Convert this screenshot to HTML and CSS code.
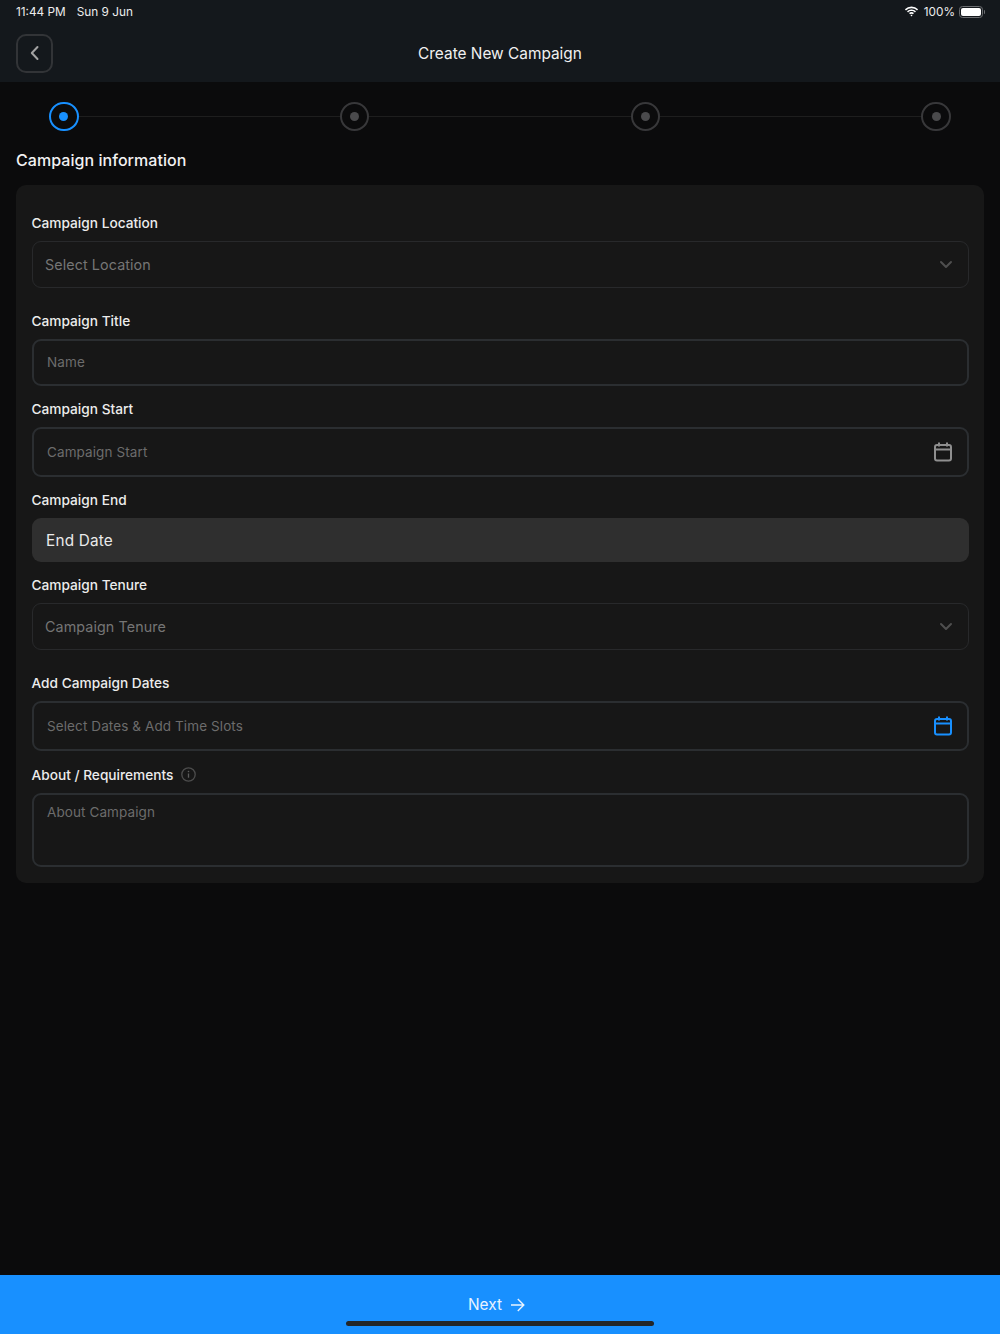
FILE: index.html
```html
<!DOCTYPE html>
<html lang="en">
<head>
<meta charset="utf-8">
<title>Create New Campaign</title>
<link rel="stylesheet" href="styles.css">
</head>
<body>
<div class="page">
  <header class="header">
    <div class="status">
      <div class="status-left"><span>11:44 PM</span><span>Sun 9 Jun</span></div>
      <div class="status-right">
        <svg class="wifi" width="15" height="11" viewBox="0 0 15 11"><path d="M7.5 2.2c2.1 0 4 .8 5.5 2.2l1.1-1.2A9.6 9.6 0 0 0 7.5.5 9.6 9.6 0 0 0 .9 3.2L2 4.4a7.9 7.9 0 0 1 5.5-2.2z" fill="#fff"/><path d="M7.5 5.1c1.3 0 2.5.5 3.4 1.3L12 5.200A6.500 6.500 0 0 0 7.500 3.500 6.500 6.500 0 0 0 3 5.200l1.100 1.200c.9-.8 2.100-1.300 3.400-1.300z" fill="#fff"/><path d="M7.500 8c-.7 0-1.100.2-1.400.5L5 7.300a3.600 3.600 0 0 1 5 0L8.900 8.500C8.600 8.200 8.200 8 7.500 8z" fill="#fff" transform="translate(0 -.2)"/><path d="M6.400 9.100 7.500 10.400 8.600 9.100a1.700 1.700 0 0 0-2.200 0z" fill="#fff"/></svg>
        <span>100%</span>
        <span class="battery"><span class="battery-fill"></span></span><span class="battery-tip"></span>
      </div>
    </div>
    <div class="navbar">
      <button class="back" type="button" aria-label="Back">
        <svg width="12" height="16" viewBox="0 0 12 16"><path d="M8.500 2 2.800 8l5.700 6" fill="none" stroke="#a3a3a3" stroke-width="2" stroke-linecap="round" stroke-linejoin="round"/></svg>
      </button>
      <h1 class="nav-title">Create New Campaign</h1>
    </div>
  </header>

  <main class="main">
    <div class="stepper">
      <span class="step step-active"><span class="dot"></span></span>
      <span class="line"></span>
      <span class="step"><span class="dot"></span></span>
      <span class="line"></span>
      <span class="step"><span class="dot"></span></span>
      <span class="line"></span>
      <span class="step"><span class="dot"></span></span>
    </div>

    <h2 class="section-title">Campaign information</h2>

    <form class="card">
      <div class="field field-select">
        <div class="label">Campaign Location</div>
        <div class="control control-select"><span class="ph">Select Location</span>
          <svg class="chev" width="14" height="9" viewBox="0 0 14 9"><path d="M2 2l5 5 5-5" fill="none" stroke="#4f4f4f" stroke-width="2" stroke-linecap="round" stroke-linejoin="round"/></svg>
        </div>
      </div>
      <div class="field">
        <div class="label">Campaign Title</div>
        <div class="control control-input h47"><span class="ph ph-small">Name</span></div>
      </div>
      <div class="field">
        <div class="label">Campaign Start</div>
        <div class="control control-input h50"><span class="ph ph-small">Campaign Start</span>
          <svg class="cal" width="20" height="20" viewBox="0 0 20 20"><g fill="none" stroke="#8f8f8f" stroke-width="2"><rect x="2" y="3" width="16" height="15.500" rx="2"/><path d="M2 7.500h16M6 .5v4M14 .5v4"/></g></svg>
        </div>
      </div>
      <div class="field">
        <div class="label">Campaign End</div>
        <div class="control control-filled">End Date</div>
      </div>
      <div class="field field-select">
        <div class="label">Campaign Tenure</div>
        <div class="control control-select"><span class="ph">Campaign Tenure</span>
          <svg class="chev" width="14" height="9" viewBox="0 0 14 9"><path d="M2 2l5 5 5-5" fill="none" stroke="#4f4f4f" stroke-width="2" stroke-linecap="round" stroke-linejoin="round"/></svg>
        </div>
      </div>
      <div class="field">
        <div class="label">Add Campaign Dates</div>
        <div class="control control-input h50"><span class="ph ph-small">Select Dates &amp; Add Time Slots</span>
          <svg class="cal" width="20" height="20" viewBox="0 0 20 20"><g fill="none" stroke="#1890ff" stroke-width="2"><rect x="2" y="3" width="16" height="15.500" rx="2"/><path d="M2 7.500h16M6 .5v4M14 .5v4"/></g></svg>
        </div>
      </div>
      <div class="field field-last">
        <div class="label label-info">About / Requirements
          <svg width="15" height="15" viewBox="0 0 15 15"><circle cx="7.500" cy="7.500" r="6.700" fill="none" stroke="#4d4d4d" stroke-width="1.300"/><path d="M7.500 6.500v4.200" stroke="#5c5c5c" stroke-width="1.300"/><circle cx="7.500" cy="4.500" r=".8" fill="#5c5c5c"/></svg>
        </div>
        <div class="control control-area"><span class="ph ph-small">About Campaign</span></div>
      </div>
    </form>
  </main>

  <footer class="footer">
    <div class="next">Next
      <svg width="15" height="14" viewBox="0 0 15 14"><path d="M1 7h12.500M7.800 1l6 6-6 6" fill="none" stroke="#e8f3ff" stroke-width="1.400"/></svg>
    </div>
    <div class="home-bar"></div>
  </footer>
</div>
</body>
</html>
```
FILE: styles.css
```css
* { box-sizing: border-box; }
html, body { margin: 0; padding: 0; }
body { background: #0b0b0c; color: #f2f2f2; font-family: Inter, "Liberation Sans", sans-serif; }
.page { width: 1000px; height: 1334px; display: flex; flex-direction: column; overflow: hidden; }

.header { height: 82px; background: #14181c; flex: none; }
.status { height: 23px; padding: 0 15px 0 16px; display: flex; justify-content: space-between; align-items: center; font-size: 11.800px; color: #ececec; }
.status-left { display: flex; gap: 11px; }
.status-right { display: flex; align-items: center; gap: 4px; }
.wifi { margin-right: 1px; }
.battery { width: 23.500px; height: 12px; border: 1px solid #6b6d70; border-radius: 3.500px; padding: 1px; display: block; }
.battery-fill { display: block; height: 100%; background: #fff; border-radius: 2px; }
.battery-tip { width: 1.500px; height: 4px; margin-left: -3px; background: #6b6d70; border-radius: 0 1px 1px 0; }

.navbar { position: relative; height: 59px; padding-top: 2px; display: flex; align-items: center; justify-content: center; }
.back { position: absolute; left: 16px; top: 11px; width: 37px; height: 38.500px; background: transparent; border: 2px solid #323437; border-radius: 10px; padding: 0; display: flex; align-items: center; justify-content: center; }
.nav-title { margin: 0; font-size: 15.400px; font-weight: 400; line-height: 57px; color: #f0f0f0; }

.main { flex: 1; padding: 19.500px 16px 0; }
.stepper { display: flex; align-items: center; padding: 0 33px; height: 29.500px; }
.step { width: 29.500px; height: 29.500px; flex: none; border-radius: 50%; border: 2px solid #38383a; display: flex; align-items: center; justify-content: center; }
.dot { width: 9px; height: 9px; border-radius: 50%; background: #4a4a4c; }
.step-active { border-color: #1890ff; }
.step-active .dot { background: #1890ff; }
.line { flex: 1; height: 1px; background: #1e1e1e; }

.section-title { margin: 0; padding-top: 19px; height: 54px; font-size: 16px; line-height: 20px; font-weight: 500; letter-spacing: .05px; color: #f2f2f2; }

.card { background: #171717; border-radius: 10px; padding: 27.500px 15.500px 16px; height: 698px; }
.field { margin-bottom: 12.500px; }
.field-select { margin-bottom: 22.500px; }
.field-last { margin-bottom: 0; }
.label { font-size: 13.700px; line-height: 20px; font-weight: 500; color: #ececec; margin-bottom: 8.500px; }
.label-info { display: flex; align-items: center; gap: 8px; margin-top: 13.500px; }
.control { display: flex; align-items: center; justify-content: space-between; border-radius: 9px; }
.control-select { height: 47px; border: 1.500px solid #28292b; padding: 0 14px 0 12.500px; }
.control-input { border: 2px solid #2b2e31; padding: 0 14px 0 13.500px; }
.h47 { height: 47px; padding-bottom: 1px; }
.h50 { height: 50px; }
.control-filled { height: 44px; background: #2f2f2f; padding: 0 14.500px; font-size: 15.300px; color: #eaeaea; letter-spacing: .2px; }
.control-area { height: 74px; border: 2px solid #2b2e31; padding: 7px 13.500px; align-items: flex-start; }
.ph { font-size: 14.300px; color: #757575; letter-spacing: .1px; }
.ph-small { font-size: 13.500px; color: #6c6c6c; line-height: 20px; letter-spacing: .1px; }
.chev { margin-right: 1px; }

.footer { height: 59px; flex: none; background: #1890ff; position: relative; display: flex; justify-content: center; padding-top: 20px; }
.next { display: flex; align-items: flex-start; gap: 8px; font-size: 15.400px; line-height: 20px; color: #e8f3ff; margin-left: -7px; }
.next svg { margin-top: 3px; }
.home-bar { position: absolute; left: 346px; bottom: 8px; width: 308px; height: 5px; border-radius: 3px; background: #232628; }
```
